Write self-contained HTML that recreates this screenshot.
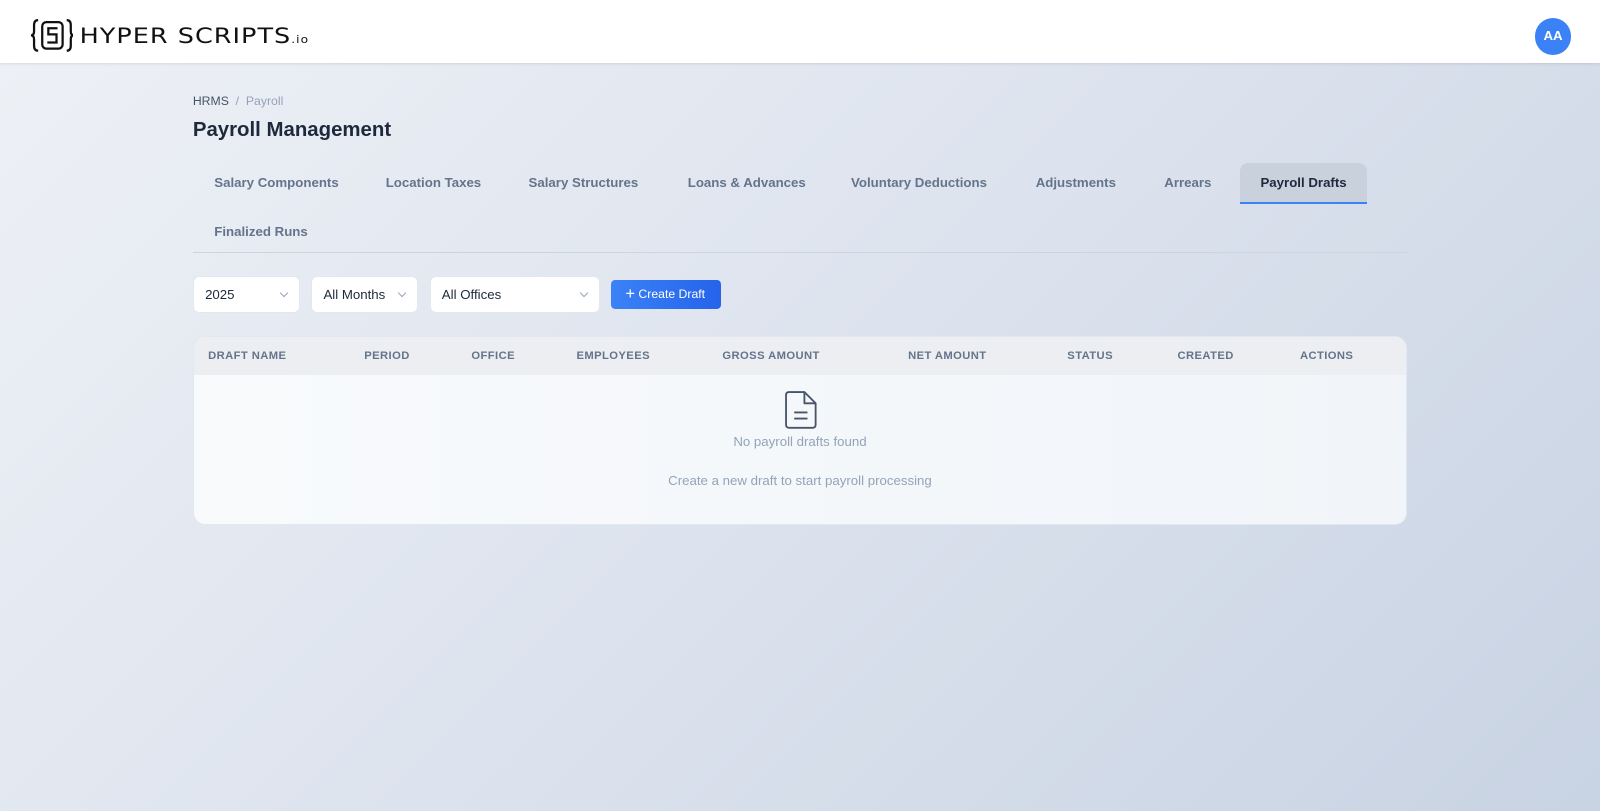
<!DOCTYPE html>
<html><head><meta charset="utf-8"><style>
*{box-sizing:border-box;margin:0;padding:0}
body{width:1600px;height:811px;overflow:hidden;font-family:"Liberation Sans",sans-serif;background:linear-gradient(135deg,#eef1f6 0%,#dde3ee 50%,#c8d3e3 100%)}
.wrap{position:relative;width:1568px;height:795px;zoom:1.0204}
.top{position:absolute;left:0;top:0;width:1568px;height:62px;background:#fff;box-shadow:0 1px 3px rgba(0,0,0,.12)}
.logo{position:absolute;left:30px;top:17px;display:flex;align-items:center}
.logo .t{font-size:25px;letter-spacing:1px;color:#111;font-family:"DejaVu Sans",sans-serif;margin-left:6px;transform:scaleY(.85)}
.av{position:absolute;left:1504px;top:18px;width:36px;height:36px;border-radius:50%;background:#3b82f6;color:#fff;font-weight:bold;font-size:13px;text-align:center;line-height:36px}
.crumb{position:absolute;left:189px;top:92px;font-size:12px;color:#475569}
.crumb span{color:#94a3b8}
h1{position:absolute;left:189px;top:117px;font-size:20px;color:#1e293b;font-weight:bold}
.tab{position:absolute;height:40px;line-height:40px;padding:0 21px;font-size:13px;font-weight:bold;color:#64748b;white-space:nowrap}
.tab.act{background:#c9d1dd;color:#1e293b;border-radius:8px 8px 0 0;border-bottom:2px solid #3b82f6;width:125px;text-align:center;padding:0}
.line{position:absolute;left:189px;top:247px;width:1190px;height:1px;background:#cbd5e1}
.sel{position:absolute;top:270px;height:37px;background:#fff;border:1px solid #e2e8f0;border-radius:6px;font-size:13px;color:#1e293b;line-height:35px;padding-left:11px}
.sel:after{content:"";position:absolute;right:12px;top:13px;width:5px;height:5px;border-right:1.3px solid #94a3b8;border-bottom:1.3px solid #94a3b8;transform:rotate(45deg)}
.btn{position:absolute;left:599px;top:274px;width:108px;height:29px;background:linear-gradient(90deg,#3b82f6,#2563eb);border-radius:4px;color:#fff;font-size:12px;line-height:29px;padding-left:14px}
.tbl{position:absolute;left:189px;top:329px;width:1190px;height:186px;border:1px solid #e2e8f0;border-radius:12px;overflow:hidden;background:linear-gradient(90deg,#f8fafc,#f1f5f9)}
.th{height:38px;background:#eceef2;position:relative}
.th span{position:absolute;top:0;line-height:38px;font-size:11px;font-weight:bold;color:#64748b;letter-spacing:.4px}
.msg{position:absolute;width:100%;text-align:center;font-size:13px;color:#94a3b8}
</style></head><body><div class="wrap">
<div class="top">
<div class="logo">
<svg width="42" height="36" viewBox="0 0 42 36" fill="none" stroke="#111" stroke-width="2.2"><path d="M7 3 Q3 3 3 8 V14 Q3 18 0 18 Q3 18 3 22 V28 Q3 33 7 33"/><path d="M35 3 Q39 3 39 8 V14 Q39 18 42 18 Q39 18 39 22 V28 Q39 33 35 33"/><rect x="11" y="5" width="20" height="26" rx="4"/><path d="M26 11 H17 V17 H25 V25 H16"/></svg>
<span class="t">HYPER SCRIPTS<span style="font-size:12px">.io</span></span>
</div>
<div class="av">AA</div>
</div>
<div class="crumb">HRMS &nbsp;<span>/</span>&nbsp; <span>Payroll</span></div>
<h1>Payroll Management</h1>
<div class="tab" style="left:189px;top:160px">Salary Components</div>
<div class="tab" style="left:357px;top:160px">Location Taxes</div>
<div class="tab" style="left:497px;top:160px">Salary Structures</div>
<div class="tab" style="left:653px;top:160px">Loans &amp; Advances</div>
<div class="tab" style="left:813px;top:160px">Voluntary Deductions</div>
<div class="tab" style="left:994px;top:160px">Adjustments</div>
<div class="tab" style="left:1120px;top:160px">Arrears</div>
<div class="tab act" style="left:1215px;top:160px">Payroll Drafts</div>
<div class="tab" style="left:189px;top:208px">Finalized Runs</div>
<div class="line"></div>
<div class="sel" style="left:189px;width:105px">2025</div>
<div class="sel" style="left:305px;width:105px">All Months</div>
<div class="sel" style="left:421px;width:167px">All Offices</div>
<div class="btn"><span style="font-size:16px;vertical-align:-1px">+</span> Create Draft</div>
<div class="tbl">
<div class="th">
<span style="left:14px">DRAFT NAME</span><span style="left:167px">PERIOD</span><span style="left:272px">OFFICE</span><span style="left:375px">EMPLOYEES</span><span style="left:518px">GROSS AMOUNT</span><span style="left:700px">NET AMOUNT</span><span style="left:856px">STATUS</span><span style="left:964px">CREATED</span><span style="left:1084px">ACTIONS</span>
</div>
<svg style="position:absolute;left:578px;top:51px" width="34" height="40" viewBox="0 0 34 40" fill="none" stroke="#475569" stroke-width="1.8" stroke-linejoin="round"><path d="M5 3 H20 L31 14 V35 Q31 38 28 38 H5 Q2 38 2 35 V6 Q2 3 5 3 Z"/><path d="M20 3 V14 H31"/><path d="M10 23 H23 M10 29 H23"/></svg>
<div class="msg" style="top:95px">No payroll drafts found</div>
<div class="msg" style="top:134px">Create a new draft to start payroll processing</div>
</div>
</div></body></html>
